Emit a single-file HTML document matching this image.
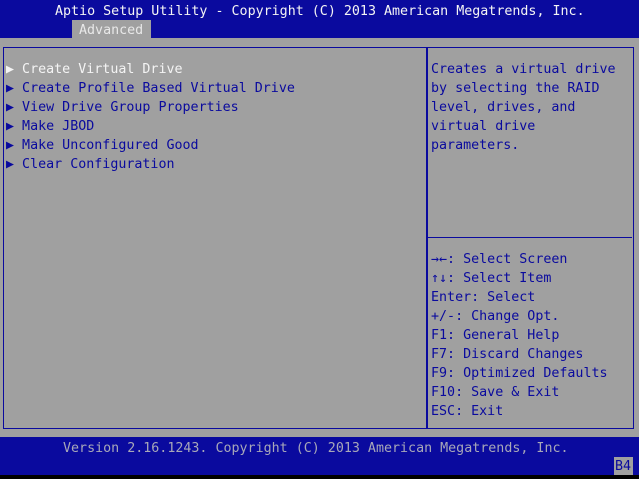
<!DOCTYPE html>
<html><head><meta charset="utf-8"><style>
html,body{margin:0;padding:0;}
body{width:639px;height:479px;background:#000;position:relative;overflow:hidden;font-family:"DejaVu Sans Mono","Liberation Mono",monospace;font-size:13.33px;}
.t{position:absolute;white-space:pre;line-height:19px;height:19px;margin-top:2px;}
.blue{background:#0a0a9e;}
.gray{background:#a0a0a0;}
.b{color:#0a0a9e;}
.w{color:#f4f4f4;}
</style></head><body>
<div class="blue" style="position:absolute;left:0;top:0;width:639px;height:38px;"></div>
<div class="t w" style="left:55px;top:0px;">Aptio Setup Utility - Copyright (C) 2013 American Megatrends, Inc.</div>
<div class="gray" style="position:absolute;left:72px;top:20px;width:79px;height:18px;"></div>
<div class="t" style="left:79px;top:19px;color:#e8e8e8;">Advanced</div>
<div class="gray" style="position:absolute;left:0;top:38px;width:639px;height:399px;"></div>
<div style="position:absolute;left:3px;top:47px;width:629px;height:380px;border:1px solid #0a0a9e;"></div>
<div style="position:absolute;left:426px;top:47px;width:2px;height:382px;background:#0a0a9e;"></div>
<div style="position:absolute;left:428px;top:237px;width:204px;height:1px;background:#0a0a9e;"></div>
<div class="t w" style="left:6px;top:58px;">▶ Create Virtual Drive</div>
<div class="t b" style="left:6px;top:77px;">▶ Create Profile Based Virtual Drive</div>
<div class="t b" style="left:6px;top:96px;">▶ View Drive Group Properties</div>
<div class="t b" style="left:6px;top:115px;">▶ Make JBOD</div>
<div class="t b" style="left:6px;top:134px;">▶ Make Unconfigured Good</div>
<div class="t b" style="left:6px;top:153px;">▶ Clear Configuration</div>
<div class="t b" style="left:431px;top:58px;">Creates a virtual drive</div>
<div class="t b" style="left:431px;top:77px;">by selecting the RAID</div>
<div class="t b" style="left:431px;top:96px;">level, drives, and</div>
<div class="t b" style="left:431px;top:115px;">virtual drive</div>
<div class="t b" style="left:431px;top:134px;">parameters.</div>
<div class="t b" style="left:431px;top:248px;">→←: Select Screen</div>
<div class="t b" style="left:431px;top:267px;">↑↓: Select Item</div>
<div class="t b" style="left:431px;top:286px;">Enter: Select</div>
<div class="t b" style="left:431px;top:305px;">+/-: Change Opt.</div>
<div class="t b" style="left:431px;top:324px;">F1: General Help</div>
<div class="t b" style="left:431px;top:343px;">F7: Discard Changes</div>
<div class="t b" style="left:431px;top:362px;">F9: Optimized Defaults</div>
<div class="t b" style="left:431px;top:381px;">F10: Save &amp; Exit</div>
<div class="t b" style="left:431px;top:400px;">ESC: Exit</div>
<div class="blue" style="position:absolute;left:0;top:437px;width:639px;height:38px;"></div>
<div class="t" style="left:63px;top:437px;color:#a8a8b8;">Version 2.16.1243. Copyright (C) 2013 American Megatrends, Inc.</div>
<div class="gray" style="position:absolute;left:614px;top:457px;width:19px;height:18px;"></div>
<div class="t b" style="left:615px;top:455px;">B4</div>
</body></html>
